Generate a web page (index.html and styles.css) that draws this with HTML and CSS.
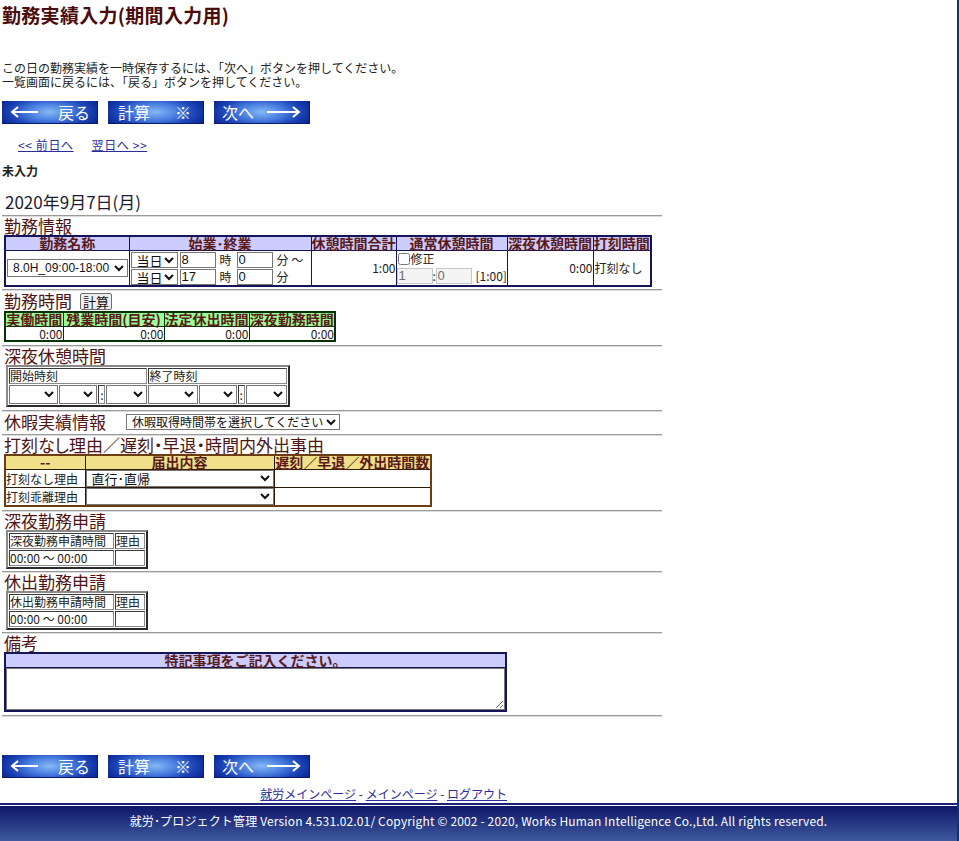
FILE: index.html
```html
<!DOCTYPE html>
<html lang="ja">
<head>
<meta charset="utf-8">
<title>勤務実績入力(期間入力用)</title>
<link rel="stylesheet" href="styles.css">
</head>
<body>
<div class="page">
  <h1 class="title">勤務実績入力(期間入力用)</h1>
  <p class="intro">この日の勤務実績を一時保存するには、「次へ」ボタンを押してください。<br>一覧画面に戻るには、「戻る」ボタンを押してください。</p>

  <div class="btnbar">
    <button class="imgbtn b-back" type="button"><svg class="arr" width="28" height="12" viewBox="0 0 28 12"><path d="M2 6H28M8 1L2 6L8 11" fill="none" stroke="#fff" stroke-width="2"/></svg><span>戻る</span></button>
    <button class="imgbtn b-calc" type="button"><span>計算</span><span>※</span></button>
    <button class="imgbtn b-next" type="button"><span>次へ</span><svg class="arr" width="34" height="12" viewBox="0 0 34 12"><path d="M0 6H32M26 1L32 6L26 11" fill="none" stroke="#fff" stroke-width="2"/></svg></button>
  </div>

  <div class="daynav"><a href="#">&lt;&lt; 前日へ</a><a href="#">翌日へ &gt;&gt;</a></div>
  <div class="status">未入力</div>
  <div class="date">2020年9月7日(月)</div>

  <hr class="rule">
  <h2 class="sec">勤務情報</h2>
  <table class="grid g-navy t-work">
    <colgroup><col class="w124"><col class="w182"><col class="w85"><col class="w111"><col class="w86"><col class="w58"></colgroup>
    <tr class="hd"><th>勤務名称</th><th>始業･終業</th><th>休憩時間合計</th><th>通常休憩時間</th><th>深夜休憩時間</th><th>打刻時間</th></tr>
    <tr class="work-row">
      <td class="c-name"><select class="sel sel-shift"><option>8.0H_09:00-18:00</option></select></td>
      <td class="c-range">
        <div class="trow"><select class="sel sel-day"><option>当日</option></select><input class="txt txt-hm" value="8"><span class="u-h">時</span><input class="txt txt-hm" value="0"><span class="u-m">分 〜</span></div>
        <div class="trow"><select class="sel sel-day"><option>当日</option></select><input class="txt txt-hm" value="17"><span class="u-h">時</span><input class="txt txt-hm" value="0"><span class="u-m">分</span></div>
      </td>
      <td class="num">1:00</td>
      <td class="c-brk">
        <label class="chk"><input type="checkbox">修正</label>
        <div class="brkrow"><input class="txt txt-dis" value="1" disabled><span class="colon">:</span><input class="txt txt-dis" value="0" disabled><span class="brk-total">[1:00]</span></div>
      </td>
      <td class="num">0:00</td>
      <td class="c-stamp">打刻なし</td>
    </tr>
  </table>

  <hr class="rule r-work">
  <div class="sec sec-btn"><h2 class="sec-in">勤務時間</h2><button class="minibtn" type="button">計算</button></div>
  <table class="grid g-green t-time">
    <colgroup><col class="w58"><col class="w101"><col class="w85"><col class="w86"></colgroup>
    <tr class="hd"><th>実働時間</th><th>残業時間(目安)</th><th>法定休出時間</th><th>深夜勤務時間</th></tr>
    <tr class="vals"><td class="num">0:00</td><td class="num">0:00</td><td class="num">0:00</td><td class="num">0:00</td></tr>
  </table>

  <hr class="rule r-time">
  <h2 class="sec">深夜休憩時間</h2>
  <table class="g-3d t-night">
    <tr class="r1"><td colspan="4">開始時刻</td><td colspan="4">終了時刻</td></tr>
    <tr class="r2">
      <td class="w49"><select class="sel sel-fill"><option></option></select></td>
      <td class="w38"><select class="sel sel-fill"><option></option></select></td>
      <td class="colon-cell">:</td>
      <td class="w41"><select class="sel sel-fill"><option></option></select></td>
      <td class="w49"><select class="sel sel-fill"><option></option></select></td>
      <td class="w38"><select class="sel sel-fill"><option></option></select></td>
      <td class="colon-cell">:</td>
      <td class="w41"><select class="sel sel-fill"><option></option></select></td>
    </tr>
  </table>

  <hr class="rule r-night">
  <div class="sec sec-leave"><h2 class="sec-in">休暇実績情報</h2><select class="sel sel-leave"><option>休暇取得時間帯を選択してください</option></select></div>

  <hr class="rule">
  <h2 class="sec">打刻なし理由／遅刻・早退・時間内外出事由</h2>
  <table class="grid g-brown t-reason">
    <colgroup><col class="w80"><col class="w189"><col class="w157"></colgroup>
    <tr class="hd"><th>--</th><th>届出内容</th><th>遅刻／早退／外出時間数</th></tr>
    <tr class="rrow"><td>打刻なし理由</td><td><select class="sel sel-fill"><option>直行･直帰</option></select></td><td></td></tr>
    <tr class="rrow"><td>打刻乖離理由</td><td><select class="sel sel-fill"><option></option></select></td><td></td></tr>
  </table>

  <hr class="rule r-reason">
  <h2 class="sec">深夜勤務申請</h2>
  <table class="g-3d t-req">
    <tr><td class="w105">深夜勤務申請時間</td><td class="w30">理由</td></tr>
    <tr><td>00:00 〜 00:00</td><td></td></tr>
  </table>

  <hr class="rule r-req">
  <h2 class="sec">休出勤務申請</h2>
  <table class="g-3d t-req">
    <tr><td class="w105">休出勤務申請時間</td><td class="w30">理由</td></tr>
    <tr><td>00:00 〜 00:00</td><td></td></tr>
  </table>

  <hr class="rule r-req">
  <h2 class="sec">備考</h2>
  <table class="grid g-navy t-note">
    <tr class="hd"><th>特記事項をご記入ください。</th></tr>
    <tr><td class="note-cell"><textarea class="note"></textarea></td></tr>
  </table>
  <hr class="rule r-note">

  <div class="btnbar btnbar-bottom">
    <button class="imgbtn b-back" type="button"><svg class="arr" width="28" height="12" viewBox="0 0 28 12"><path d="M2 6H28M8 1L2 6L8 11" fill="none" stroke="#fff" stroke-width="2"/></svg><span>戻る</span></button>
    <button class="imgbtn b-calc" type="button"><span>計算</span><span>※</span></button>
    <button class="imgbtn b-next" type="button"><span>次へ</span><svg class="arr" width="34" height="12" viewBox="0 0 34 12"><path d="M0 6H32M26 1L32 6L26 11" fill="none" stroke="#fff" stroke-width="2"/></svg></button>
  </div>

  <div class="menulinks"><a href="#">就労メインページ</a> - <a href="#">メインページ</a> - <a href="#">ログアウト</a></div>
</div>
<footer class="foot">
  <div class="foot-in">就労･プロジェクト管理 Version 4.531.02.01/ Copyright © 2002 - 2020, Works Human Intelligence Co.,Ltd. All rights reserved.</div>
</footer>
</body>
</html>
```

FILE: styles.css
```css
* { box-sizing: border-box; }
html { background: #fff; }
body {
  margin: 0;
  width: 959px;
  min-height: 841px;
  border-right: 2px solid #1d2f63;
  font-family: "Noto Sans CJK JP", "Liberation Sans", sans-serif;
  font-size: 12px;
  line-height: 14px;
  color: #222;
}
.page { padding-left: 2px; }

.title {
  margin: 4px 0 0;
  font-size: 19px;
  line-height: 22px;
  font-weight: bold;
  letter-spacing: 0.3px;
  color: #4a0c0c;
}
.intro { margin: 35px 0 0; }

.btnbar { display: flex; gap: 10px; margin-top: 12px; }
.imgbtn {
  width: 96px;
  height: 23px;
  padding: 0;
  border: 0;
  border-right: 1px solid #0a1870;
  border-bottom: 1px solid #0a1870;
  display: flex;
  align-items: center;
  justify-content: space-between;
  background:
    radial-gradient(ellipse 55% 90% at 50% 50%, #86b8f6 0%, #4a80e0 40%, #1c44b8 75%, #0d2a94 100%);
  color: #fff;
  font-family: "Noto Sans CJK JP", sans-serif;
  font-size: 16px;
  line-height: 20px;
  cursor: pointer;
}
.b-back { padding: 0 7px 0 8px; }
.b-calc { padding: 0 12px 0 10px; }
.b-next { padding: 0 8px; }
.arr { display: block; }

.daynav { margin-top: 14px; padding-left: 16px; display: flex; gap: 18px; letter-spacing: 0.6px; }
.daynav a, .menulinks a { color: #2b2b9b; }
.status { margin-top: 12px; font-weight: bold; color: #222; }
.date { margin-top: 14px; padding-left: 3px; font-size: 17px; line-height: 20px; color: #1a1a33; }

.rule {
  width: 660px;
  height: 2px;
  margin: 3px 0 0;
  border: 0;
  border-top: 1px solid #9a9a9a;
  border-bottom: 1px solid #dcdcdc;
}
.r-work { margin-top: 2px; }
.r-time { margin-top: 3px; }
.r-night { margin-top: 3px; }
.r-reason { margin-top: 3px; }
.r-req { margin-top: 2px; }
.r-note { margin-top: 3px; }

.sec {
  margin: 0;
  padding-left: 2px;
  height: 18px;
  font-size: 17px;
  line-height: 18px;
  font-weight: normal;
  font-feature-settings: "palt";
  color: #4e1414;
}
.sec-btn { display: flex; align-items: center; gap: 8px; height: 20px; }
.sec-leave { display: flex; align-items: center; height: 19px; }
.sec-in { margin: 0; font-size: 17px; font-weight: normal; line-height: 18px; }

.minibtn {
  height: 17px;
  padding: 0 2px;
  border: 1px solid #6b6b6b;
  border-radius: 2px;
  background: #efefef;
  font-family: "Noto Sans CJK JP", sans-serif;
  font-size: 13px;
  line-height: 13px;
  color: #111;
}

/* generic grid tables */
.grid {
  margin-left: 2px;
  border-collapse: collapse;
  table-layout: fixed;
}
.grid th {
  padding: 0;
  height: 13px;
  font-size: 14px;
  line-height: 13px;
  font-weight: bold;
  color: #5a1a1a;
  white-space: nowrap;
}
.grid td { padding: 0; white-space: nowrap; line-height: 14px; }
.num { text-align: right; }

.g-navy { border: 2px solid #141458; }
.g-navy th, .g-navy td { border: 1px solid #141458; }
.g-navy th { background: #ccccff; }

.g-green { border: 2px solid #043204; }
.g-green th, .g-green td { border: 1px solid #043204; }
.g-green th { background: #99ff99; }

.g-brown { border: 2px solid #6b3d10; }
.g-brown th, .g-brown td { border: 1px solid #2a1a06; }
.g-brown th { background: #f0e08a; }

.w124 { width: 124px; } .w182 { width: 182px; } .w85 { width: 85px; }
.w111 { width: 111px; } .w86 { width: 86px; } .w58 { width: 58px; }
.w101 { width: 101px; } .w80 { width: 80px; } .w189 { width: 189px; } .w157 { width: 157px; }

.t-work { width: 646px; }
.work-row td { height: 34px; vertical-align: middle; }
.c-name { padding-left: 1px !important; }
.c-range { padding-left: 1px !important; }
.trow { display: flex; align-items: center; height: 17px; }
.u-h { margin: 0 5px 0 4px; }
.u-m { margin-left: 4px; }
.c-brk { vertical-align: top !important; }
.chk { display: flex; align-items: center; height: 16px; }
.chk input { margin: 0 1px 0 1px; width: 12px; height: 12px; }
.brkrow { display: flex; align-items: center; height: 17px; }
.colon { width: 3px; text-align: center; }
.brk-total { margin-left: 4px; }
.c-stamp { padding-left: 1px !important; }

.sel {
  display: block;
  height: 16px;
  padding: 0 0 0 1px;
  border: 1px solid #767676;
  border-radius: 0;
  background: #fff;
  font-family: "Liberation Sans", "Noto Sans CJK JP", sans-serif;
  font-size: 12px;
  line-height: 14px;
  color: #111;
}
.sel-shift { width: 121px; height: 18px; }
.sel-day { width: 47px; margin-right: 2px; font-size: 13px; }
.sel-fill { width: 100%; }
.sel-leave { width: 214px; margin-left: 20px; }

.txt {
  display: block;
  height: 16px;
  padding: 0 1px;
  border: 1px solid #767676;
  font-family: "Liberation Sans", "Noto Sans CJK JP", sans-serif;
  font-size: 13px;
  line-height: 14px;
  color: #111;
  background: #fff;
}
.txt-hm { width: 36px; }
.txt-dis { width: 36px; background: #f4f4f4; border-color: #c6c6c6; color: #6d6d6d; }

.t-time { width: 331px; }
.vals td { height: 13px; line-height: 13px; }

/* 3d-bordered tables */
.g-3d {
  margin-left: 4px;
  border-collapse: separate;
  border-spacing: 1px;
  border: 2px solid;
  border-color: #8a8a8a #2a2a2a #2a2a2a #8a8a8a;
}
.g-3d td {
  padding: 0;
  border: 1px solid;
  border-color: #3a3a3a #8a8a8a #8a8a8a #3a3a3a;
  white-space: nowrap;
  line-height: 14px;
}
.t-night { width: 284px; }
.t-night .r1 td { height: 16px; }
.t-night .r2 td { height: 19px; }
.t-night .r2 td:not(.colon-cell) { border: 0; }
.t-night .sel-fill { height: 19px; }
.w49 { width: 49px; } .w38 { width: 38px; } .w41 { width: 41px; }
.colon-cell { width: 7px; text-align: center; }

.t-reason { width: 426px; }
.rrow td { height: 17px; }
.rrow .sel-fill { height: 17px; font-size: 13px; }

.t-req { width: 142px; }
.t-req td { height: 16px; }
.w105 { width: 105px; } .w30 { width: 30px; }

.t-note { width: 503px; }
.note-cell { padding: 0 !important; }
.note {
  display: block;
  width: 100%;
  height: 42px;
  margin: 0;
  border: 1px solid #767676;
  font-family: "Noto Sans CJK JP", sans-serif;
  font-size: 13px;
}

.btnbar-bottom { margin-top: 38px; }
.menulinks { width: 505px; margin-top: 9px; text-align: right; color: #222; }

.foot {
  margin-top: 2px;
  border-top: 2px solid #1a2278;
  padding-top: 1px;
  background: #fff;
}
.foot-in {
  height: 35px;
  padding-top: 8px;
  background: linear-gradient(#0e166a, #3e5a9c);
  color: #fff;
  text-align: center;
  font-size: 12px;
  line-height: 14px;
  letter-spacing: 0.15px;
}
```
